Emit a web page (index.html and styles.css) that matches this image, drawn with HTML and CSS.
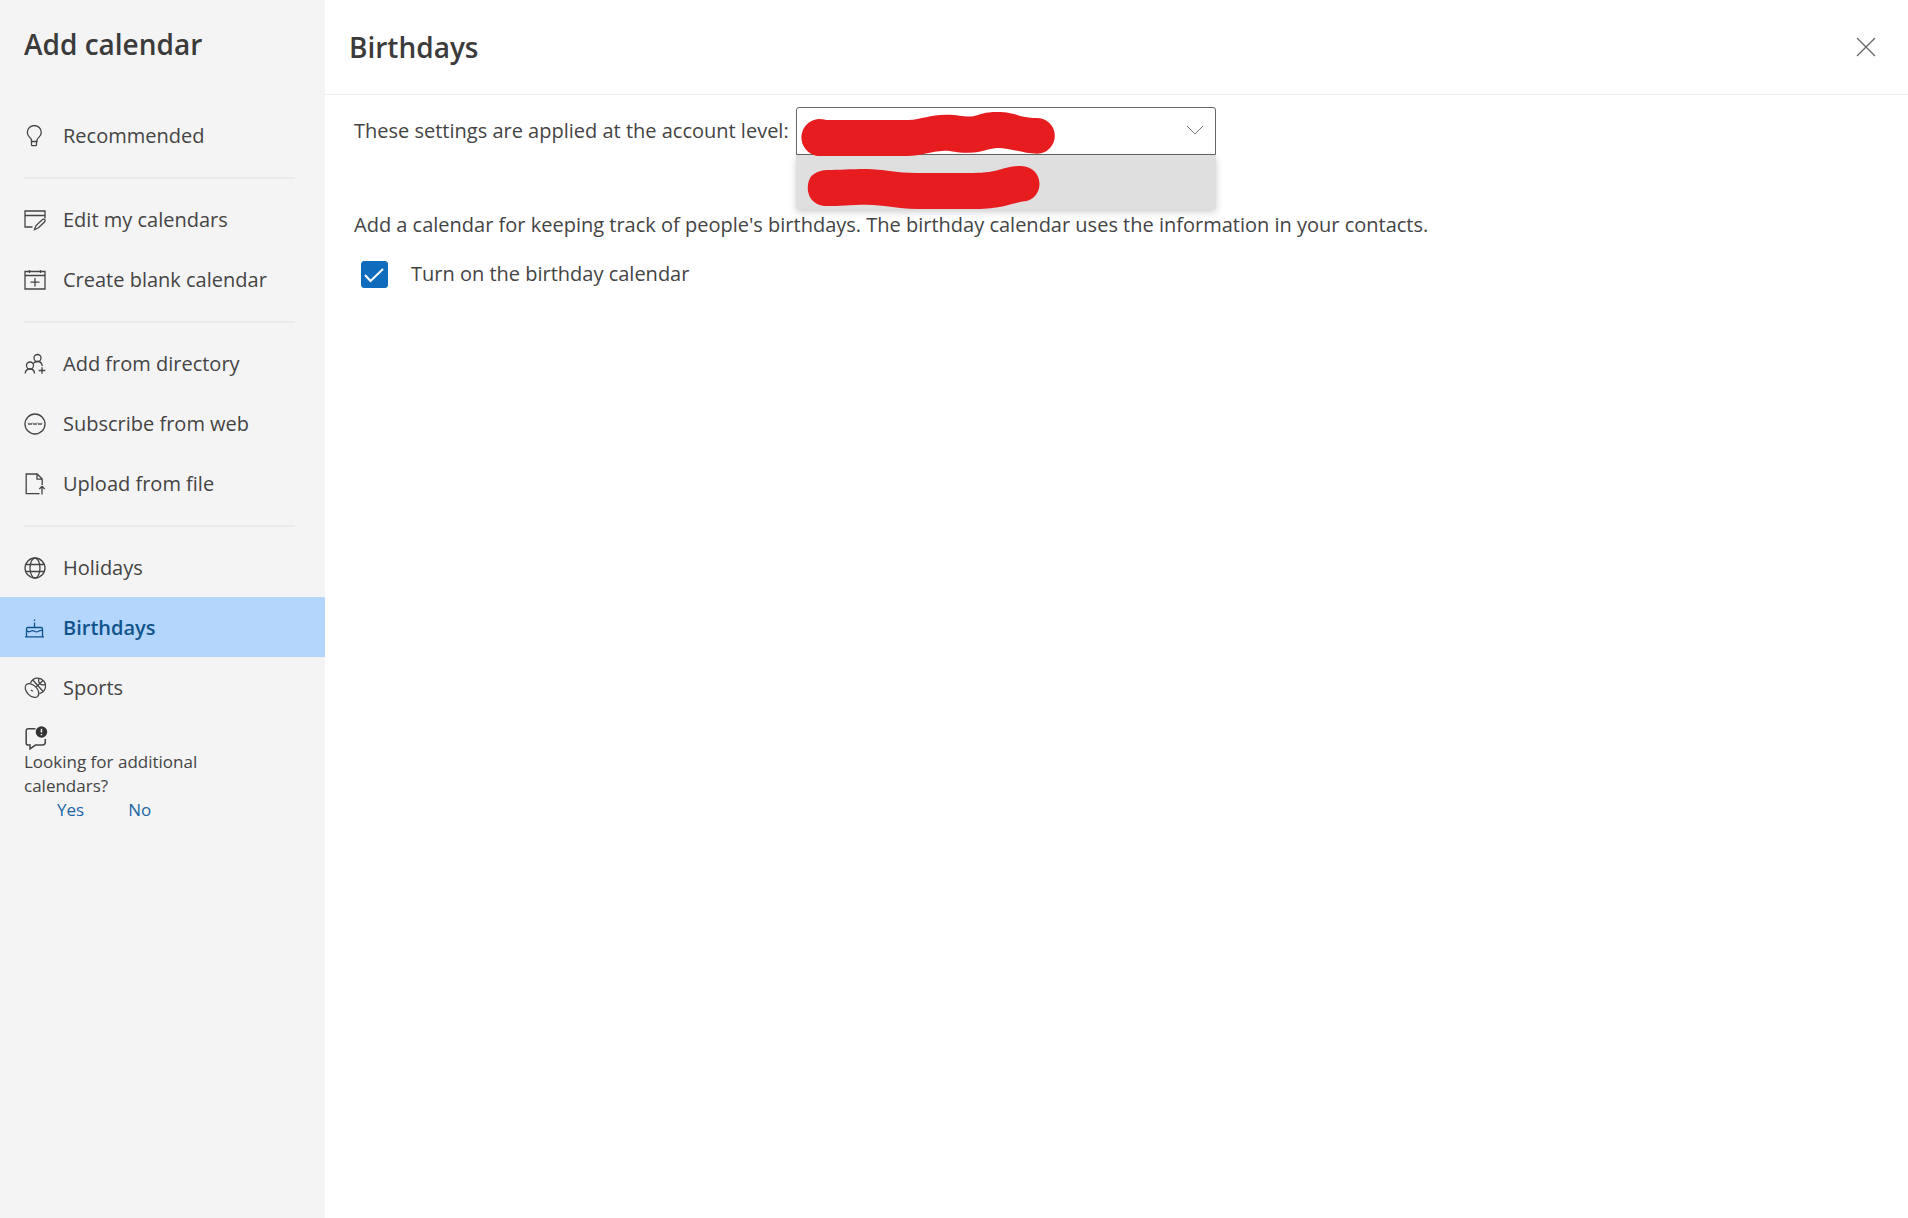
FILE: index.html
```html
<!DOCTYPE html>
<html lang="en">
<head>
    <meta charset="UTF-8">
    <title>Add calendar</title>
    <link rel="stylesheet" href="styles.css">
</head>
<body>
    <aside class="sidebar">
        <h1 class="title">Add calendar</h1>
        <nav class="menu">
            <button type="button" class="menu-item">
                <svg class="icon" viewBox="0 0 22 22"><path d="M7.5 16.5V15C7 12.500 3.300 11.500 3.300 7.500a7 7 0 0 1 14 0C17.300 11.500 13.500 12.500 13 15v1.500zM7.500 16.500v3.200q0 1 1 1h3q1 0 1-1v-3.200"/></svg>
                Recommended
            </button>
            <hr class="divider">
            <button type="button" class="menu-item">
                <svg class="icon" viewBox="0 0 22 22"><path d="M8.500 18H1V2h20v7.500M1 6.500h20M10.500 20.500l1.500-4 6.500-6q1.300-.8 2.200.1t0 2.200l-6.200 6z"/></svg>
                Edit my calendars
            </button>
            <button type="button" class="menu-item">
                <svg class="icon" viewBox="0 0 22 22"><path d="M1 2.500h20V20H1zM1 6.500h20M5.500 1v3M16.500 1v3M11 9v8.500M6.500 13.200h9"/></svg>
                Create blank calendar
            </button>
            <hr class="divider">
            <button type="button" class="menu-item">
                <svg class="icon" viewBox="0 0 22 22"><circle cx="13.500" cy="5" r="3.500"/><circle cx="6" cy="12.500" r="3.500"/><path d="M1.200 20.500q.3-4.500 4.800-4.500t4.500 4.500M9.300 10.500q1.200-2 4.200-2 4.500 0 4.700 4.500M18 14.300v6.500M14.700 17.500h6.600"/></svg>
                Add from directory
            </button>
            <button type="button" class="menu-item">
                <svg class="icon" viewBox="0 0 22 22"><circle cx="11" cy="11" r="10"/><path stroke-width="0.8" d="M4 9.700l1 2.300 1-2 1 2 1-2.300M9 9.700l1 2.300 1-2 1 2 1-2.300M14 9.700l1 2.300 1-2 1 2 1-2.300"/></svg>
                Subscribe from web
            </button>
            <button type="button" class="menu-item">
                <svg class="icon" viewBox="0 0 22 22"><path d="M15.500 20.700H2.200V1h11l5 5v6M13 1v5.200h5.200M18 13.500v8M15.300 16l2.700-2.700 2.700 2.700"/></svg>
                Upload from file
            </button>
            <hr class="divider">
            <button type="button" class="menu-item">
                <svg class="icon" viewBox="0 0 22 22"><circle cx="11" cy="11" r="10"/><ellipse cx="11" cy="11" rx="5" ry="10"/><path d="M1.800 7.500h18.400M1.800 14.500h18.400"/></svg>
                Holidays
            </button>
            <button type="button" class="menu-item active" aria-current="page">
                <svg class="icon" viewBox="0 0 22 22"><path d="M1 19.800h19M2.500 19.800v-8q0-1.300 1.300-1.300h13.400q1.300 0 1.300 1.300v8M2.500 13.500q2 2 4 .7t4 0 4 0 4-.7M10.500 5.500v5M10.500 2.500v1.500"/></svg>
                Birthdays
            </button>
            <button type="button" class="menu-item">
                <svg class="icon" viewBox="0 0 22 22"><path d="M6.500 6A7.800 7.800 0 1 1 15.500 16.500M9 3.200L18.700 14M19.300 3.300L12 10M15 1.300q-1 3 .5 5t5.500 1.500"/><ellipse cx="8" cy="13.500" rx="5.200" ry="8.200" transform="rotate(-44 8 13.500)"/><path d="M7 13l1.800 1.200"/></svg>
                Sports
            </button>
        </nav>
        <section class="feedback">
            <svg class="feedback-icon" viewBox="0 0 22 22"><path d="M10.500 2.500H4q-2 0-2 2v11q0 2 2 2h1.500V21l5-3.500H17q2.500 0 2.500-2.500v-3"/><circle class="badge" cx="16" cy="5.500" r="5.300"/><path class="mark" d="M16 2.500v3.500M16 7.300v1.200"/></svg>
            <p class="question">Looking for additional calendars?</p>
            <div class="answers">
                <button type="button" class="answer">Yes</button>
                <button type="button" class="answer">No</button>
            </div>
        </section>
    </aside>

    <main class="panel">
        <header class="panel-header">
            <h2 class="title">Birthdays</h2>
            <button type="button" class="close" aria-label="Close">
                <svg viewBox="0 0 20 20"><path d="M1 1l18 18M19 1L1 19"/></svg>
            </button>
        </header>
        <div class="panel-body">
            <div class="account-row">
                <label for="account">These settings are applied at the account level:</label>
                <div class="dropdown">
                    <select id="account" class="account"></select>
                    <svg class="chevron" viewBox="0 0 18 10"><path d="M1 1l8 8 8-8"/></svg>
                    <div class="dropdown-list"></div>
                    <!-- marker strokes hiding the account names -->
                    <svg class="marker" viewBox="48 51 1260 306">
                        <path d="M115 87Q128 87 140 90H385C425 88 450 74 497 74C540 74 550 82 580 79C605 73 610 66 653 66C705 66 715 83 770 84A53 53 0 0 1 772 191C730 191 690 173 650 174C620 177 610 187 567 188C530 189 520 182 493 182C450 184 425 197 380 198H125A55 55 0 0 1 115 87Z"/>
                        <path d="M140 240C180 240 210 237 260 237C310 237 345 249 410 249H580C660 249 665 229 722 228C795 230 795 325 735 334C690 340 680 354 600 357H410C350 355 310 345 260 344C210 344 180 348 140 348C75 345 75 280 95 257Q112 242 140 240Z"/>
                    </svg>
                </div>
            </div>
            <p class="description">Add a calendar for keeping track of people's birthdays. The birthday calendar uses the information in your contacts.</p>
            <label class="toggle">
                <input type="checkbox" class="checkbox" checked>
                <svg class="check" viewBox="0 0 27 27"><path d="M4 14l5.500 6L22 8"/></svg>
                Turn on the birthday calendar
            </label>
        </div>
    </main>
</body>
</html>
```

FILE: styles.css
```css
* {
    box-sizing: border-box;
}
body {
    margin: 0;
    display: flex;
    min-height: 100vh;
    font-family: "Open Sans", "Noto Sans", sans-serif;
    font-size: 20px;
    line-height: 28px;
    color: #444;
    background-color: #fff;
}
button {
    padding: 0;
    border: none;
    background: none;
    font: inherit;
    color: inherit;
    cursor: pointer;
}
svg {
    fill: none;
    stroke: currentColor;
}
.title {
    margin: 0;
    font-size: 28px;
    line-height: 40px;
    font-weight: 600;
    color: #3b3b3b;
}

/* Sidebar */
.sidebar {
    flex: 0 0 325px;
    background-color: #f4f4f4;
}
.sidebar .title {
    padding: 24px 24px 41px;
}
.menu {
    display: flex;
    flex-direction: column;
}
.menu-item {
    display: flex;
    align-items: center;
    gap: 17px;
    height: 60px;
    padding: 2px 24px 0;
    text-align: left;
}
.menu-item.active {
    background-color: #b4d5fc;
    color: #0f548c;
    font-weight: 600;
}
.icon {
    width: 22px;
    height: 22px;
    stroke-width: 1.3;
}
.divider {
    height: 2px;
    margin: 12px 30px 10px 24px;
    border: none;
    background-color: #eaeaea;
}
.feedback {
    padding: 9px 24px;
    font-size: 17px;
    line-height: 24px;
}
.feedback-icon {
    display: block;
    width: 24px;
    height: 24px;
    stroke-width: 1.4;
}
.badge {
    fill: #333;
    stroke: none;
}
.mark {
    stroke: #f4f4f4;
}
.question {
    max-width: 200px;
    margin: 0;
}
.answers {
    display: flex;
    gap: 44px;
    padding-left: 33px;
}
.answer {
    color: #1b65a6;
}

/* Main panel */
.panel {
    flex: 1;
}
.panel-header {
    display: flex;
    align-items: center;
    justify-content: space-between;
    height: 95px;
    padding: 0 32px 0 24px;
    border-bottom: 1px solid #eee;
}
.close {
    width: 20px;
    height: 20px;
}
.close svg {
    display: block;
    color: #666;
    stroke-width: 1.3;
}
.panel-body {
    padding: 12px 29px;
}
.account-row {
    display: flex;
    align-items: center;
    gap: 7px;
}
.dropdown {
    position: relative;
    width: 420px;
}
.account {
    display: block;
    width: 100%;
    height: 48px;
    padding: 0 40px 0 12px;
    appearance: none;
    border: 1px solid #666;
    border-radius: 3px 3px 0 0;
    background-color: #fff;
    font: inherit;
    color: inherit;
}
.chevron {
    position: absolute;
    top: 18px;
    right: 12px;
    width: 18px;
    height: 10px;
    color: #777;
    pointer-events: none;
}
.dropdown-list {
    position: absolute;
    top: 100%;
    left: 0;
    width: 100%;
    height: 54px;
    background-color: #dfdfdf;
    box-shadow: 0 3px 7px rgba(0, 0, 0, 0.2);
}
.marker {
    position: absolute;
    top: 0;
    left: 0;
    width: 420px;
    height: 102px;
    fill: #e71c1f;
    stroke: none;
    pointer-events: none;
}
.description {
    margin: 56px 0 21px;
}
.toggle {
    position: relative;
    display: flex;
    align-items: center;
    gap: 23px;
    padding-left: 7px;
}
.checkbox {
    width: 27px;
    height: 27px;
    margin: 0;
    appearance: none;
    border: 1px solid #666;
    border-radius: 3px;
}
.checkbox:checked {
    border-color: #0f6cbd;
    background-color: #0f6cbd;
}
.check {
    position: absolute;
    left: 7px;
    width: 27px;
    height: 27px;
    color: #fff;
    stroke-width: 2;
    pointer-events: none;
}
```
